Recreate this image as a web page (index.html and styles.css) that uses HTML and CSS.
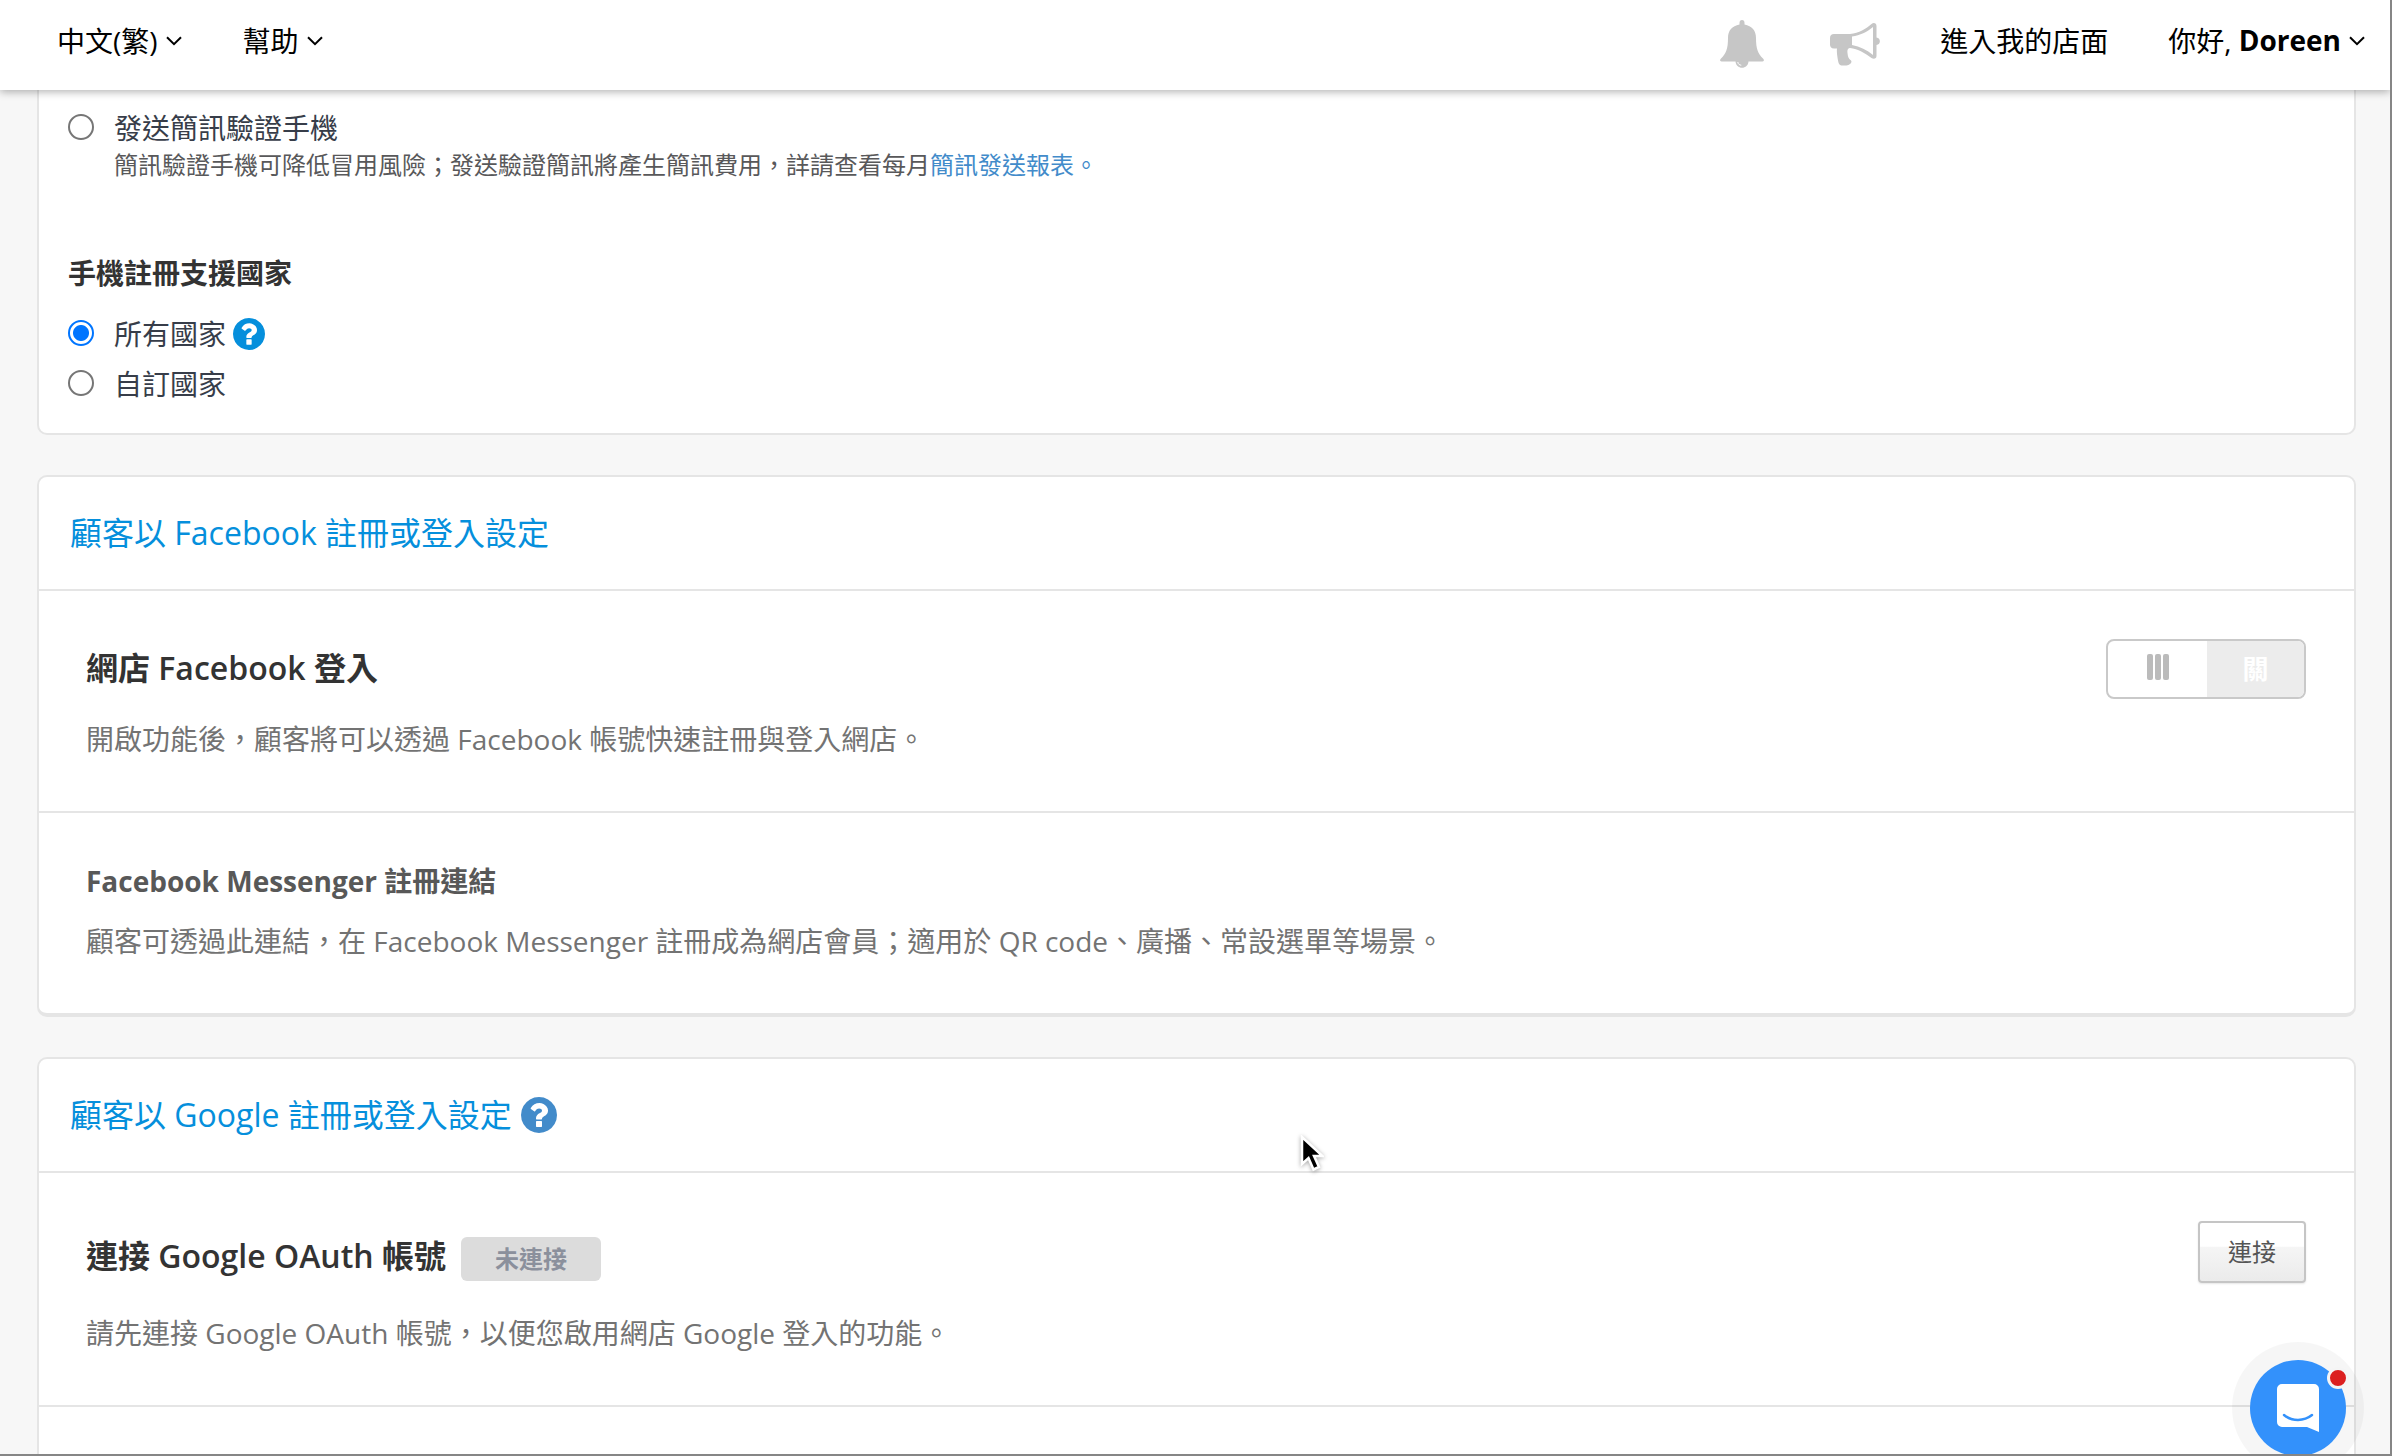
FILE: index.html
```html
<!DOCTYPE html>
<html lang="zh-Hant">
<head>
  <meta charset="UTF-8">
  <title>顧客設定</title>
  <link rel="stylesheet" href="styles.css">
</head>
<body>

<svg class="defs">
  <symbol id="chevron" viewBox="0 0 16 10">
    <path d="M1 1.2l7 7 7-7" fill="none" stroke="currentColor" stroke-width="2"/>
  </symbol>
  <symbol id="question" viewBox="128 128 1536 1536">
    <path fill="currentColor" d="M1024 1376v-192q0-14-9-23t-23-9h-192q-14 0-23 9t-9 23v192q0 14 9 23t23 9h192q14 0 23-9t9-23zM1280 704q0-88-55.500-163t-138.500-116-170-41q-243 0-371 213-15 24 8 42l132 100q7 6 19 6 16 0 25-12 53-68 86-92 34-24 86-24 48 0 85.500 26t37.500 59q0 38-20 61t-68 45q-63 28-115.500 86.500t-52.500 125.500v36q0 14 9 23t23 9h192q14 0 23-9t9-23q0-19 21.500-49.500t54.500-49.500q32-18 49-28.500t46-35 44.500-48 28-60.500 12.500-81zM1664 896q0 209-103 385.500t-279.500 279.500-385.500 103-385.500-103-279.500-279.500-103-385.500 103-385.500 279.500-279.500 385.500-103 385.500 103 279.500 279.500 103 385.500z"/>
  </symbol>
</svg>

<div class="app">
  <header class="navbar">
    <nav class="nav-left">
      <a class="nav-item">中文(繁)<svg class="chevron"><use href="#chevron"/></svg></a>
      <a class="nav-item">幫助<svg class="chevron"><use href="#chevron"/></svg></a>
    </nav>
    <nav class="nav-right">
      <svg class="icon-bell" viewBox="0 0 44 48">
        <path d="M19.500 4.500V3a2.500 3 0 0 1 5 0v1.500C32 6 36 10.500 36 18c0 11 2 15.500 7 20.500 2 2 .5 3-1.500 3H2.500c-2 0-3.500-1-1.500-3 5-5 7-9.500 7-20.500 0-7.500 4-12 11.500-13.500z" fill="#c6c6c6"/>
        <path d="M15.500 41h13c0 9-13 9-13 0z" fill="#c6c6c6"/>
        <path d="M17.800 42c.2 2 1.600 3.200 3.500 3.200" fill="none" stroke="#fff" stroke-width="1"/>
      </svg>
      <svg class="icon-horn" viewBox="0 0 50 43">
        <path fill="#c6c6c6" fill-rule="evenodd" d="M4 11h16C29 10 36 6 41.500 1c2.500-2 5-.5 5 2v11.500c4.500.5 4.500 7 0 7.500v11c0 2.500-2.500 3.500-5 2C35 30 28 26 20 25c-2 0-3 2-2.500 5 .3 3 .8 6 3.500 7.500 1.500 2-1 4.500-4.500 5h-4c-3 0-4-2-4.500-5-.6-4-1.500-8-1-12H4c-3 0-4-2-4-4V15c0-2.500 1.500-4 4-4zm18 2.500v8.500c8 1.500 15 5 21 10V4c-6 5-13 8.500-21 9.500z"/>
      </svg>
      <a class="nav-item">進入我的店面</a>
      <a class="nav-item">你好,&nbsp;<b>Doreen</b><svg class="chevron"><use href="#chevron"/></svg></a>
    </nav>
  </header>

  <main class="content">
    <section class="card card-phone">
      <label class="radio-row"><span class="radio"></span>發送簡訊驗證手機</label>
      <p class="hint">簡訊驗證手機可降低冒用風險；發送驗證簡訊將產生簡訊費用，詳請查看每月<a>簡訊發送報表。</a></p>
      <h4>手機註冊支援國家</h4>
      <label class="radio-row all"><span class="radio checked"></span>所有國家<svg class="help"><use href="#question"/></svg></label>
      <label class="radio-row custom"><span class="radio"></span>自訂國家</label>
    </section>

    <section class="card card-facebook">
      <h2>顧客以 Facebook 註冊或登入設定</h2>
      <div class="panel fb-login">
        <div>
          <h3>網店 Facebook 登入</h3>
          <p>開啟功能後，顧客將可以透過 Facebook 帳號快速註冊與登入網店。</p>
        </div>
        <div class="switch">
          <span class="handle"><i></i><i></i><i></i></span>
          <span class="off">關</span>
        </div>
      </div>
      <div class="panel fb-messenger">
        <div>
          <h4>Facebook Messenger 註冊連結</h4>
          <p>顧客可透過此連結，在 Facebook Messenger 註冊成為網店會員；適用於 QR code、廣播、常設選單等場景。</p>
        </div>
      </div>
    </section>

    <section class="card card-google">
      <h2>顧客以 Google 註冊或登入設定<svg class="help"><use href="#question"/></svg></h2>
      <div class="panel google-oauth">
        <div>
          <h3>連接 Google OAuth 帳號<span class="badge">未連接</span></h3>
          <p>請先連接 Google OAuth 帳號，以便您啟用網店 Google 登入的功能。</p>
        </div>
        <button class="btn">連接</button>
      </div>
      <div class="panel"></div>
    </section>
  </main>

  <div class="chat">
    <svg viewBox="0 0 42 48">
      <path d="M5 0h32a5 5 0 0 1 5 5v43l-12-5H5a5 5 0 0 1-5-5V5a5 5 0 0 1 5-5z" fill="#fff"/>
      <path d="M7 31c8 6.500 20 6.500 28 0" fill="none" stroke="#3391fb" stroke-width="2.500" stroke-linecap="round"/>
    </svg>
    <span class="dot"></span>
  </div>

  <svg class="cursor" viewBox="0 0 24 38">
    <path d="M2 2v27l6.500-6 5 11.500 5.500-2.500-5-11h8.500z" fill="#000" stroke="#fff" stroke-width="2.500"/>
  </svg>
</div>

</body>
</html>
```

FILE: styles.css
```css
* {
  box-sizing: border-box;
}
body {
  margin: 0;
  font-family: "Open Sans", "Noto Sans CJK TC", sans-serif;
  font-size: 28px;
  color: #333;
  background: #f7f7f7;
}
h2, h3, h4, p {
  margin: 0;
}
.defs {
  display: none;
}
.app {
  position: relative;
  width: 2392px;
  height: 1456px;
  overflow: hidden;
  border-right: 2px solid #868686;
  border-bottom: 2px solid #868686;
}

/* navbar */
.navbar {
  position: relative;
  z-index: 2;
  display: flex;
  justify-content: space-between;
  height: 90px;
  padding: 0 25px 10px 57px;
  background: #fff;
  box-shadow: 0 2px 8px rgba(0, 0, 0, 0.3);
  color: #000;
}
.nav-left, .nav-right, .nav-item {
  display: flex;
  align-items: center;
}
.nav-left {
  gap: 61px;
}
.nav-item {
  white-space: nowrap;
}
.chevron {
  width: 16px;
  height: 10px;
  margin: 2px 0 0 8px;
}
.nav-right .nav-item {
  margin-left: 60px;
}
.icon-bell {
  width: 44px;
  height: 48px;
  margin: 8px 66px 0 0;
}
.icon-horn {
  width: 50px;
  height: 43px;
  margin-top: 9px;
}

/* cards */
.content {
  padding: 0 34px 0 37px;
}
.card {
  background: #fff;
  border: 2px solid #e5e5e5;
  border-radius: 10px;
}
.card-phone {
  height: 345px;
  padding: 16px 29px;
  border-top: 0;
  border-radius: 0 0 10px 10px;
}
.radio-row {
  display: flex;
  align-items: center;
  height: 42px;
  color: #373d49;
}
.radio {
  width: 26px;
  height: 26px;
  margin-right: 20px;
  border: 2px solid #767676;
  border-radius: 50%;
}
.radio.checked {
  border-color: #0075ff;
  background: radial-gradient(circle, #0075ff 7.5px, #fff 8.5px);
}
.help {
  width: 32px;
  height: 32px;
  margin: 2px 0 0 7px;
  color: #058fdc;
}
.hint {
  height: 34px;
  margin-left: 46px;
  font-size: 24px;
  line-height: 34px;
  color: #58585a;
}
.hint a {
  color: #428bca;
}
.card-phone h4 {
  margin-top: 71px;
  line-height: 40px;
}
.all {
  margin-top: 19px;
}
.custom {
  margin-top: 8px;
}
.card-facebook {
  height: 542px;
  margin-top: 40px;
  border-bottom-width: 4px;
}
.card-google {
  height: 440px;
  margin-top: 40px;
}
.card h2 {
  display: flex;
  align-items: center;
  height: 112px;
  padding: 0 0 4px 31px;
  font-size: 32px;
  font-weight: 400;
  color: #058fdc;
}
.card h2 .help {
  width: 36px;
  height: 36px;
  margin: 4px 0 0 9px;
  color: #428bca;
}
.panel {
  display: flex;
  justify-content: space-between;
  border-top: 2px solid #e5e5e5;
  padding: 48px 48px 0 47px;
}
.panel h3 {
  display: flex;
  align-items: center;
  height: 60px;
  padding-bottom: 6px;
  font-size: 32px;
  font-weight: 600;
}
.panel h4 {
  height: 44px;
  line-height: 44px;
  color: #585858;
}
.panel p {
  line-height: 40px;
  color: #737373;
}
.fb-login {
  height: 222px;
}
.fb-login p {
  margin-top: 20px;
}
.fb-messenger {
  padding-top: 46px;
}
.fb-messenger p {
  margin-top: 18px;
}
.google-oauth {
  height: 234px;
}
.google-oauth h3 {
  height: 72px;
}
.google-oauth p {
  margin-top: 20px;
}

.switch {
  display: flex;
  width: 200px;
  height: 60px;
  border: 2px solid #c9c9c9;
  border-radius: 8px;
  overflow: hidden;
}
.switch span {
  display: flex;
  align-items: center;
  justify-content: center;
}
.switch .handle {
  width: 99px;
  gap: 2px;
  padding-bottom: 4px;
}
.handle i {
  width: 6px;
  height: 26px;
  border-radius: 2px;
  background: #bbb;
}
.switch .off {
  flex: 1;
  padding-bottom: 2px;
  background: #ececec;
  color: #fff;
  font-size: 26px;
  font-weight: 700;
}
.badge {
  width: 140px;
  height: 44px;
  margin: 9px 0 0 15px;
  border-radius: 6px;
  background: #dcdcdc;
  color: #8b909c;
  font-size: 24px;
  line-height: 43px;
  text-align: center;
}
.btn {
  width: 108px;
  height: 62px;
  padding: 0 0 3px;
  border: 2px solid #c5c5c5;
  border-radius: 4px;
  background: linear-gradient(#fff 40%, #f5f5f5 42%, #ebebeb);
  box-shadow: 0 1px 2px rgba(0, 0, 0, 0.1);
  color: #555;
  font-family: inherit;
  font-size: 24px;
}

/* floating chat button */
.chat {
  position: absolute;
  z-index: 3;
  left: 2250px;
  top: 1360px;
  display: flex;
  align-items: center;
  justify-content: center;
  width: 96px;
  height: 96px;
  border-radius: 50%;
  background: #3391fb;
  box-shadow: 0 0 0 18px rgba(0, 0, 0, 0.035);
}
.chat svg {
  width: 42px;
  height: 48px;
}
.dot {
  position: absolute;
  top: 7px;
  right: -3px;
  width: 22px;
  height: 22px;
  border: 3px solid #f5f5f5;
  border-radius: 50%;
  background: #dc2020;
}
.cursor {
  position: absolute;
  left: 1300px;
  top: 1135px;
  width: 24px;
  height: 38px;
  filter: drop-shadow(0 1px 2px rgba(0, 0, 0, 0.35));
}
```
